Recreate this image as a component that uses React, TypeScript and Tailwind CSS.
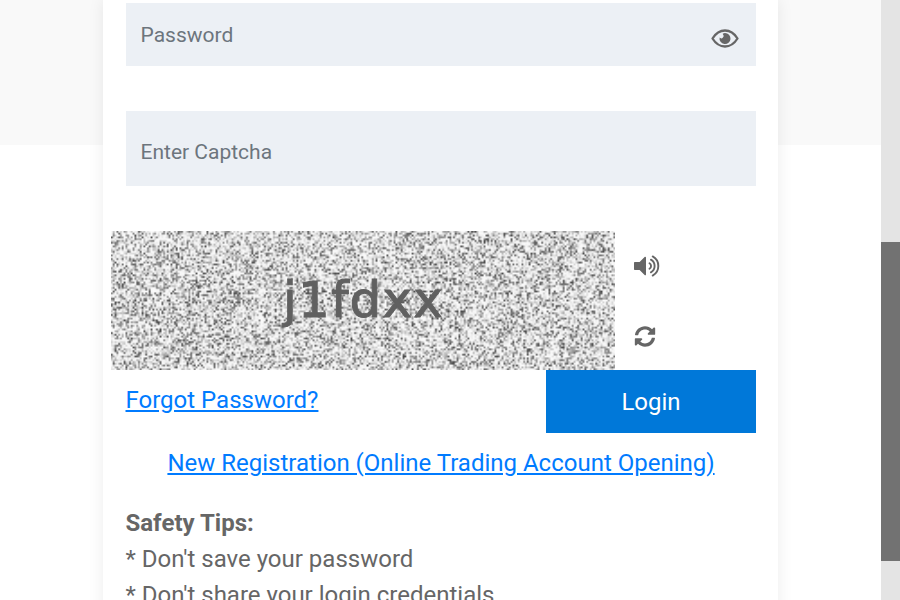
import { useEffect, useRef } from "react";
import { FaSyncAlt } from "react-icons/fa";

// Paints repeatable greyscale static behind the captcha characters.
function CaptchaNoise() {
  const ref = useRef<HTMLCanvasElement>(null);
  useEffect(() => {
    const ctx = ref.current?.getContext("2d");
    if (!ctx) return;
    const w = 280;
    const h = 77;
    const image = ctx.createImageData(w, h);
    let seed = 90210;
    for (let i = 0; i < w * h; i++) {
      seed = (Math.imul(seed, 1664525) + 1013904223) >>> 0;
      const r = seed / 4294967296;
      const v = 250 - Math.pow(r, 2.8) * 180;
      image.data[i * 4] = v;
      image.data[i * 4 + 1] = v;
      image.data[i * 4 + 2] = v;
      image.data[i * 4 + 3] = 255;
    }
    ctx.putImageData(image, 0, 0);
  }, []);
  return <canvas ref={ref} width={280} height={77} className="absolute inset-0 h-full w-full" />;
}

function EyeIcon() {
  return (
    <svg viewBox="0 0 28 19" className="absolute right-[17px] top-[26px] h-[19px] w-[28px]" fill="none">
      <path
        d="M1.5 9.5C4.8 4.2 9 1.5 14 1.5s9.2 2.700 12.500 8c-3.300 5.300-7.500 8-12.500 8S4.800 14.800 1.500 9.500Z"
        stroke="currentColor"
        strokeWidth="2.300"
        strokeLinejoin="round"
      />
      <path d="M14 4.100a5.500 5.500 0 1 1-5.400 4.500 2.100 2.100 0 0 0 3.300-3.400A2 2 0 0 0 11.700 4.700 5.500 5.500 0 0 1 14 4.100Z" fill="currentColor" />
    </svg>
  );
}

function SpeakerIcon() {
  return (
    <svg viewBox="0 0 26 22" className="h-[22px] w-[26px]" fill="none" stroke="currentColor" strokeWidth="1.900" strokeLinecap="round">
      <path d="M1 7h4.600l5-5c.6-.6 1.400-.2 1.400.6v16.800c0 .8-.8 1.200-1.400.6l-5-5H1c-.6 0-1-.4-1-1V8c0-.6.4-1 1-1Z" fill="currentColor" stroke="none" />
      <path d="M15.500 8.200a3.300 3.300 0 0 1 0 5.600M16.900 4.700a7.200 7.200 0 0 1 0 12.600M18.700 1.400a11 11 0 0 1 0 19.200" />
    </svg>
  );
}

const field =
  "block w-full bg-[#ecf0f5] pl-[15px] text-[21px] leading-6 text-[#6c757d] placeholder:text-[#6c757d] placeholder:opacity-100 outline-none";

export default function App() {
  return (
    <div className="flex h-[600px] w-[900px] overflow-hidden bg-white font-['Roboto','Liberation_Sans',sans-serif] text-[#666]">
      <div className="flex w-[881px] bg-[linear-gradient(#f9f9f9_145px,white_145px)] pl-[103px]">
        <main className="h-[620px] w-[675px] bg-white px-[22.5px] pt-[3px] shadow-[0_0_15px_rgba(0,0,0,0.08)]">
          <div className="relative">
            <input className={`${field} h-[63px]`} placeholder="Password" type="password" />
            <EyeIcon />
          </div>
          <input className={`${field} mt-[45px] h-[75px] pt-[7px]`} placeholder="Enter Captcha" />

          <div className="-ml-[14.5px] mt-[45px] flex h-[139px]">
            <div className="relative w-[504px] overflow-hidden">
              <CaptchaNoise />
              <span className="absolute left-[172px] top-[40px] font-['DejaVu_Sans'] text-[50px] leading-[58px] tracking-[1.1px] text-[#606060] blur-[0.6px] [-webkit-text-stroke:1px_#606060]">
                j1fdxx
              </span>
            </div>
            <div className="ml-[19px] flex flex-col pt-6">
              <SpeakerIcon />
              <FaSyncAlt className="mt-[49px] h-[21px] w-[22px]" />
            </div>
          </div>

          <div className="flex h-[63px] items-start justify-between">
            <a className="mt-3 text-2xl leading-9 text-[#007bff] underline" href="#">Forgot Password?</a>
            <button className="h-[63px] w-[210px] bg-[#0078d9] pl-px text-2xl text-white">Login</button>
          </div>
          <div className="mt-3 pl-px text-center text-2xl leading-9">
            <a className="text-[#007bff] underline" href="#">New Registration (Online Trading Account Opening)</a>
          </div>
          <div className="mt-6 text-2xl leading-9">
            <b>Safety Tips:</b>
            <p>* Don't save your password</p>
            <p>* Don't share your login credentials</p>
          </div>
        </main>
      </div>
      <div className="h-full w-[19px] bg-[#e4e4e4] pt-[242px]">
        <div className="h-[319px] bg-[#727272]" />
      </div>
    </div>
  );
}
